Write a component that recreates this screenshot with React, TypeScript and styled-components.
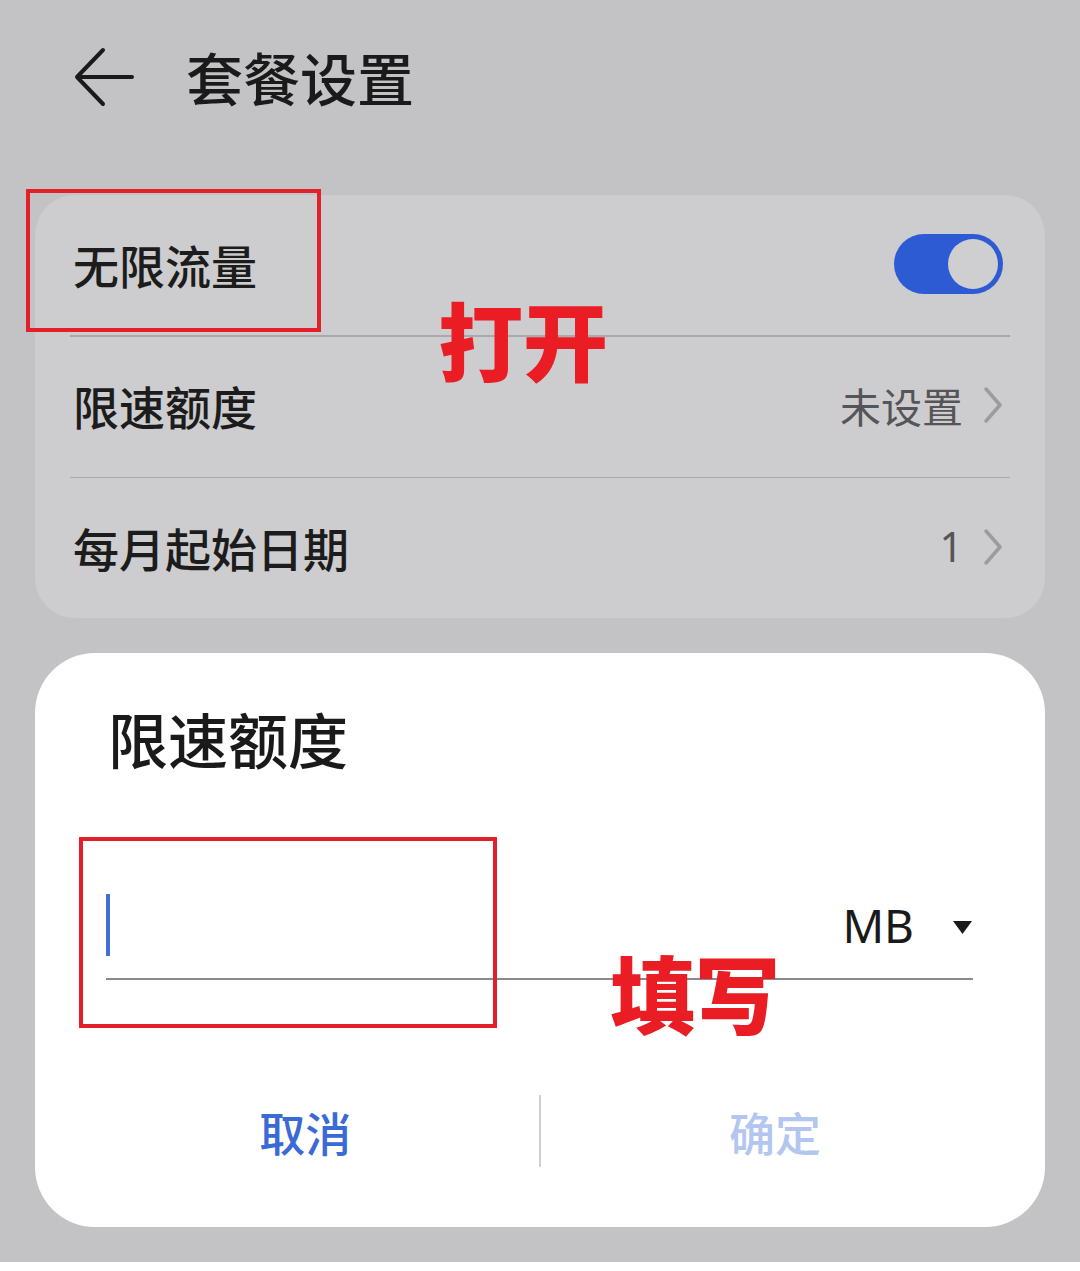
import styled, { createGlobalStyle } from 'styled-components';

const GlobalStyle = createGlobalStyle`
  html, body {
    margin: 0;
    padding: 0;
    background: #ffffff;
  }
  body {
    font-family: 'Noto Sans CJK SC', 'Noto Sans', sans-serif;
  }
`;

const Page = styled.div`
  width: 1080px;
  height: 1271px;
  display: flex;
  flex-direction: column;
  background: #ffffff;
`;

const Screen = styled.div`
  height: 1262px;
  background: #c3c3c5;
  display: flex;
  flex-direction: column;
`;

const Header = styled.header`
  display: flex;
  align-items: center;
  height: 60px;
  padding: 46px 0 2px 74px;
  gap: 50px;
`;

const BackIcon = styled.svg`
  width: 62px;
  height: 60px;
  flex-shrink: 0;
  margin-top: 2px;
`;

const Title = styled.h1`
  margin: 0;
  font-size: 57px;
  line-height: 1;
  font-weight: 500;
  color: #1a1a1a;
`;

const Card = styled.section`
  position: relative;
  margin: 87px 35px 0;
  background: #cdcdcf;
  border-radius: 40px;
`;

const Row = styled.div`
  height: 140px;
  box-sizing: border-box;
  display: flex;
  align-items: center;
  justify-content: space-between;
  padding: 0 42px 3px 38px;
`;

const Label = styled.span`
  font-size: 46px;
  line-height: 1;
  font-weight: 500;
  color: #1c1c1c;
`;

const Divider = styled.div`
  height: 1.5px;
  margin: 0 35px;
  background: #a9a9ab;
`;

const Value = styled.span<{ $latin?: boolean }>`
  display: flex;
  align-items: center;
  gap: 20px;
  font-size: 41px;
  line-height: 1;
  color: #555557;
  font-family: ${p =>
    p.$latin
      ? "'Noto Sans', sans-serif"
      : "'Noto Sans CJK SC', sans-serif"};
`;

const Chevron = styled.svg`
  width: 20px;
  height: 38px;
`;

const Toggle = styled.div<{ $on: boolean }>`
  width: 109px;
  height: 60px;
  border-radius: 30px;
  background: ${p => (p.$on ? '#2d5bd3' : '#9a9a9c')};
  display: flex;
  align-items: center;
  justify-content: ${p => (p.$on ? 'flex-end' : 'flex-start')};
  padding: 0 5px;
  box-sizing: border-box;
`;

const Knob = styled.div`
  width: 50px;
  height: 50px;
  border-radius: 50%;
  background: #cfcfd1;
`;

const MarkBox = styled.div<{ $left: number; $top: number; $w: number; $h: number }>`
  position: absolute;
  left: ${p => p.$left}px;
  top: ${p => p.$top}px;
  width: ${p => p.$w}px;
  height: ${p => p.$h}px;
  border: 4px solid #e3202a;
  box-sizing: border-box;
  pointer-events: none;
`;

const MarkText = styled.span<{ $left: number; $top: number }>`
  position: absolute;
  left: ${p => p.$left}px;
  top: ${p => p.$top}px;
  font-size: 85px;
  line-height: 1;
  font-weight: 900;
  color: #ea1c24;
  white-space: nowrap;
`;

const Dialog = styled.section`
  position: relative;
  margin: 35px 35px 0;
  height: 574px;
  box-sizing: border-box;
  background: #ffffff;
  border-radius: 60px;
  padding: 55px 0 60px;
  display: flex;
  flex-direction: column;
`;

const DialogTitle = styled.h2`
  margin: 0 0 0 73px;
  font-size: 60px;
  line-height: 1;
  font-weight: 500;
  color: #1a1a1a;
`;

const InputRow = styled.div`
  margin: 120px 72px 0 71px;
  height: 74px;
  padding-bottom: 16px;
  display: flex;
  align-items: center;
  border-bottom: 2px solid #8a8a8a;
`;

const Caret = styled.div`
  width: 4px;
  height: 62px;
  background: #3f6fd9;
`;

const Unit = styled.div`
  margin-left: auto;
  display: flex;
  align-items: center;
  gap: 38px;
  font-family: 'Noto Sans', sans-serif;
  font-size: 46px;
  line-height: 1;
  color: #1a1a1a;
`;

const Caret2 = styled.svg`
  width: 21px;
  height: 15px;
  margin-top: 4px;
`;

const Actions = styled.div`
  margin-top: auto;
  height: 72px;
  display: flex;
  align-items: center;
  padding: 0 36px;
`;

const ActionButton = styled.button<{ $disabled?: boolean }>`
  flex: 1;
  height: 100%;
  border: none;
  background: none;
  padding: 0;
  font-family: 'Noto Sans CJK SC', sans-serif;
  font-size: 46px;
  font-weight: 500;
  line-height: 1;
  color: ${p => (p.$disabled ? '#b3c6f0' : '#3a6ad6')};
`;

const VLine = styled.div`
  width: 1.5px;
  height: 72px;
  background: #cfcfcf;
`;

const ChevronIcon = () => (
  <Chevron viewBox="0 0 20 38">
    <path
      d="M3 3 L17 19 L3 35"
      fill="none"
      stroke="#9c9c9e"
      strokeWidth="3.5"
      strokeLinecap="round"
      strokeLinejoin="round"
    />
  </Chevron>
);

export default function App() {
  return (
    <Page>
      <GlobalStyle />
      <Screen>
        <Header>
          <BackIcon viewBox="0 0 62 60">
            <path
              d="M29 3 L3 30 L29 57 M3 30 L58 30"
              fill="none"
              stroke="#1a1a1a"
              strokeWidth="4"
              strokeLinecap="round"
              strokeLinejoin="round"
            />
          </BackIcon>
          <Title>套餐设置</Title>
        </Header>

        <Card>
          <Row>
            <Label>无限流量</Label>
            <Toggle $on>
              <Knob />
            </Toggle>
          </Row>
          <Divider />
          <Row>
            <Label>限速额度</Label>
            <Value>
              未设置
              <ChevronIcon />
            </Value>
          </Row>
          <Divider />
          <Row>
            <Label>每月起始日期</Label>
            <Value $latin>
              1
              <ChevronIcon />
            </Value>
          </Row>
          <MarkBox $left={-9} $top={-6} $w={295} $h={143} />
          <MarkText $left={403} $top={100}>打开</MarkText>
        </Card>

        <Dialog>
          <DialogTitle>限速额度</DialogTitle>
          <InputRow>
            <Caret />
            <Unit>
              MB
              <Caret2 viewBox="0 0 21 15">
                <path d="M1 1 L20 1 L10.5 14 Z" fill="#1a1a1a" />
              </Caret2>
            </Unit>
          </InputRow>
          <Actions>
            <ActionButton>取消</ActionButton>
            <VLine />
            <ActionButton $disabled>确定</ActionButton>
          </Actions>
          <MarkBox $left={44} $top={184} $w={418} $h={191} />
          <MarkText $left={575} $top={295}>填写</MarkText>
        </Dialog>
      </Screen>
    </Page>
  );
}
